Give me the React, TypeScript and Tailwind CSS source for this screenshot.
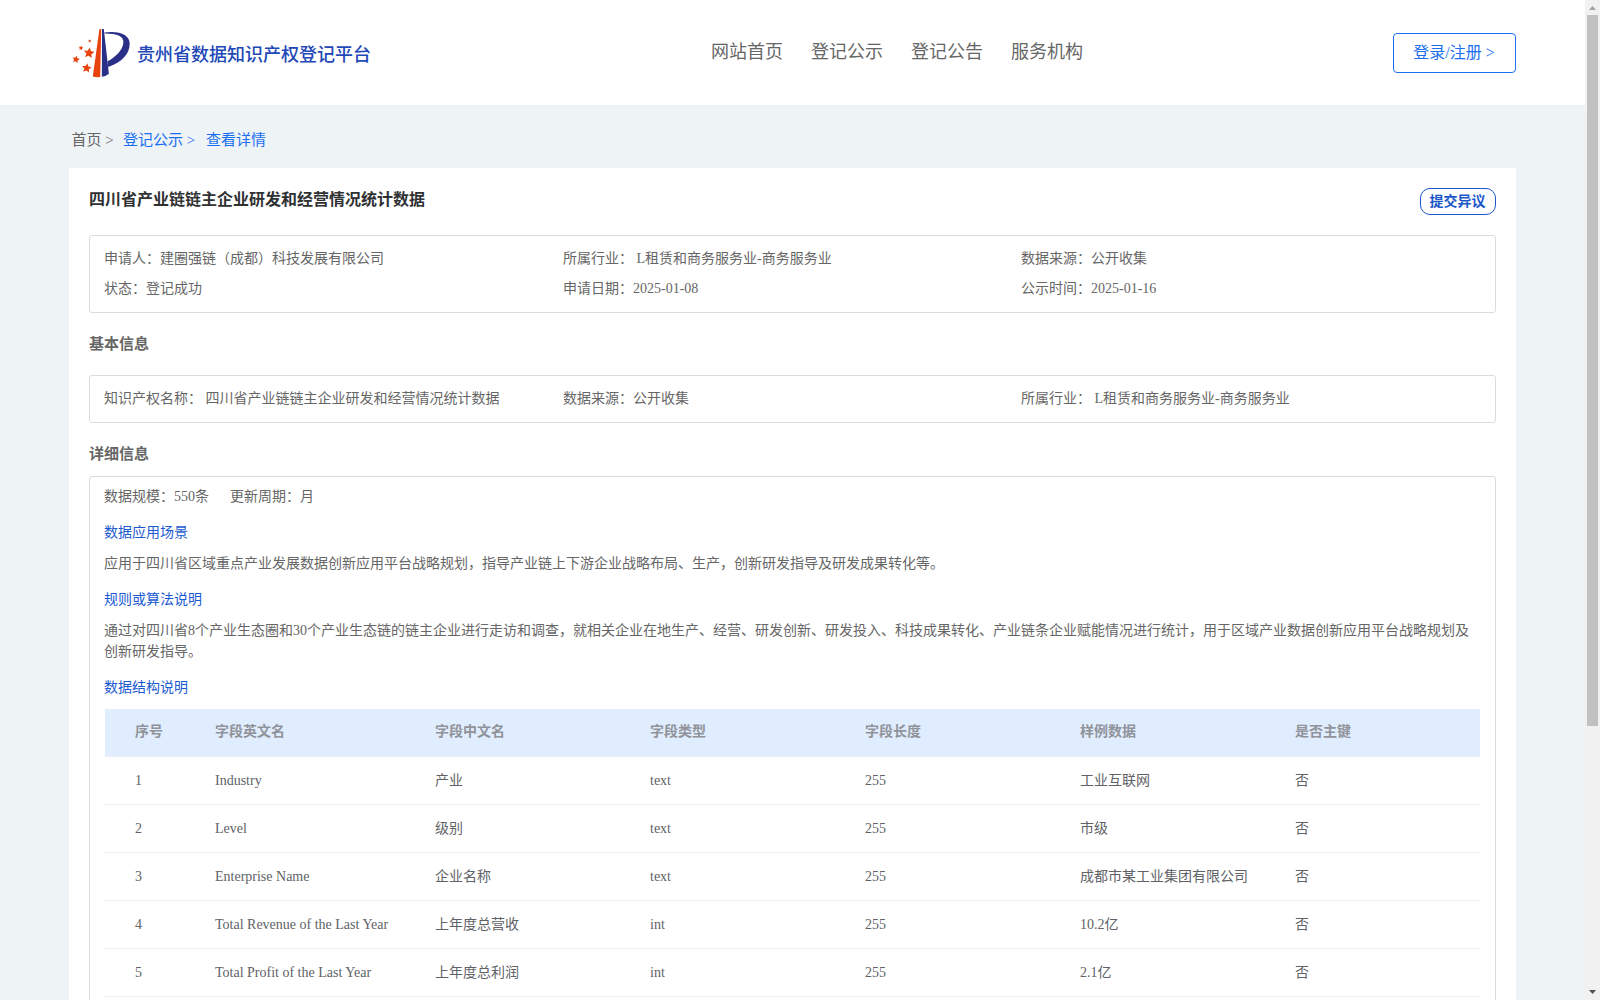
import React from "react";

const NAV = ["网站首页", "登记公示", "登记公告", "服务机构"];

const SUMMARY = [
  { label: "申请人：", value: "建圈强链（成都）科技发展有限公司" },
  { label: "所属行业：", value: " L租赁和商务服务业-商务服务业" },
  { label: "数据来源：", value: "公开收集" },
  { label: "状态：", value: "登记成功" },
  { label: "申请日期：", value: "2025-01-08" },
  { label: "公示时间：", value: "2025-01-16" },
];

const BASIC = [
  { label: "知识产权名称：", value: " 四川省产业链链主企业研发和经营情况统计数据" },
  { label: "数据来源：", value: "公开收集" },
  { label: "所属行业：", value: " L租赁和商务服务业-商务服务业" },
];

const COLUMNS = ["序号", "字段英文名", "字段中文名", "字段类型", "字段长度", "样例数据", "是否主键"];

const ROWS = [
  ["1", "Industry", "产业", "text", "255", "工业互联网", "否"],
  ["2", "Level", "级别", "text", "255", "市级", "否"],
  ["3", "Enterprise Name", "企业名称", "text", "255", "成都市某工业集团有限公司", "否"],
  ["4", "Total Revenue of the Last Year", "上年度总营收", "int", "255", "10.2亿", "否"],
  ["5", "Total Profit of the Last Year", "上年度总利润", "int", "255", "2.1亿", "否"],
];

const STARS = [
  { x: 21, y: 29, r: 5.6, tilt: 8 },
  { x: 8, y: 35.5, r: 3.9, tilt: 12 },
  { x: 18.7, y: 44.2, r: 5, tilt: 8 },
  { x: 13, y: 24, r: 2.5, tilt: 10 },
  { x: 21.7, y: 17, r: 1.7, tilt: 0 },
];

function starPoints(r: number) {
  return Array.from({ length: 10 }, (_, i) => {
    const radius = i % 2 ? r * 0.48 : r;
    const a = (Math.PI / 5) * i - Math.PI / 2;
    return `${(radius * Math.cos(a)).toFixed(2)},${(radius * Math.sin(a)).toFixed(2)}`;
  }).join(" ");
}

function Logo() {
  return (
    <svg width="66" height="60" viewBox="0 0 66 60" className="shrink-0">
      <path d="M31.4 5.3 L33.2 5 L32.2 53 Q28 53.4 24.8 52.6 Z" fill="#e8430f" />
      <path d="M34 5 L35.8 5 L40.9 49.8 Q38 52.4 33.9 52.8 Z" fill="#2a3088" />
      <path
        d="M36.5 8.4 C45 7 61.7 8 61.7 19.5 C61.7 30 54 38 40.2 43 L39.6 37.2 C47 33.5 55.4 26 55.4 17.5 C55.2 12 49 9.3 36.5 9.4 Z"
        fill="#2a3088"
      />
      {STARS.map((s) => (
        <polygon
          key={`${s.x}-${s.y}`}
          points={starPoints(s.r)}
          transform={`translate(${s.x} ${s.y}) rotate(${s.tilt})`}
          fill="#e8430f"
        />
      ))}
    </svg>
  );
}

function InfoGrid({ items }: { items: { label: string; value: string }[] }) {
  return (
    <div className="grid grid-cols-[459px_458px_458px] rounded-[3px] border border-[#dcdcdc] px-[14px] pt-[7px] pb-[9px]">
      {items.map((it) => (
        <div key={it.label} className="h-[30px] whitespace-pre leading-[31px]">
          {it.label}
          {it.value}
        </div>
      ))}
    </div>
  );
}

function Scrollbar() {
  return (
    <div className="flex w-[15px] shrink-0 flex-col items-center bg-[#f1f1f1]">
      <svg width="15" height="15" viewBox="0 0 15 15" className="shrink-0">
        <path d="M4 10 L7.5 6 L11 10 Z" fill="#a3a3a3" />
      </svg>
      <div className="h-[711px] w-[11px] bg-[#c1c1c1]" />
      <svg width="15" height="15" viewBox="0 0 15 15" className="mt-auto shrink-0">
        <path d="M4 5 L11 5 L7.5 9 Z" fill="#505050" />
      </svg>
    </div>
  );
}

export default function App() {
  return (
    <div className="flex h-screen overflow-hidden bg-[#eef3f6] font-['Liberation_Serif','Noto_Sans_CJK_SC',serif] text-sm text-[#666]">
      <div className="min-w-0 flex-1">
        <header className="h-[105px] bg-white">
          <div className="mx-[69px] flex items-start">
            <div className="-ml-px flex w-[643px] items-start pt-6">
              <Logo />
              <h1 className="ml-[3px] pt-px text-lg leading-[60px] font-medium whitespace-nowrap text-[#2248b8]">
                贵州省数据知识产权登记平台
              </h1>
            </div>
            <nav className="flex gap-7 pt-[38px] text-lg leading-7 text-[#666]">
              {NAV.map((item) => (
                <a key={item}>{item}</a>
              ))}
            </nav>
            <div className="ml-auto flex pt-[33px]">
              <button className="h-10 w-[123px] rounded border border-[#1a6ff0] pr-px text-base whitespace-nowrap text-[#1a6ff0]">
                登录/注册 &gt;
              </button>
            </div>
          </div>
        </header>

        <div className="ml-[71.5px] flex h-[63px] items-center pt-[9px] text-[15px] whitespace-pre text-[#1a6ff0]">
          <span className="w-[51.5px] text-[#666]">首页 &gt;</span>
          <span className="w-[83px]">登记公示 &gt;</span>
          <span>查看详情</span>
        </div>

        <main className="mx-[69px] bg-white px-5 py-5">
          <div className="flex h-[47px] items-start justify-between">
            <h2 className="text-base leading-[23px] font-bold text-[#303133]">
              四川省产业链链主企业研发和经营情况统计数据
            </h2>
            <button className="h-[27px] w-[76px] rounded-[10px] border border-[#1a57c8] pr-px leading-[24px] font-bold text-[#1a57c8]">
              提交异议
            </button>
          </div>

          <InfoGrid items={SUMMARY} />
          <h3 className="flex h-[62px] items-center pt-px text-[15px] font-bold">基本信息</h3>
          <InfoGrid items={BASIC} />
          <h3 className="flex h-[53px] items-center pt-[10px] text-[15px] font-bold">详细信息</h3>

          <div className="rounded-[3px] border border-[#dcdcdc] px-[14px] pt-[9px] pb-5 leading-[21px]">
            <div className="flex gap-[21px]">
              <span>数据规模：550条</span>
              <span className="flex">
                更新周期：<span>月</span>
              </span>
            </div>
            <h4 className="mt-[15px] text-[#1a5ad0]">数据应用场景</h4>
            <p className="mt-[10px]">
              应用于四川省区域重点产业发展数据创新应用平台战略规划，指导产业链上下游企业战略布局、生产，创新研发指导及研发成果转化等。
            </p>
            <h4 className="mt-[15px] text-[#1a5ad0]">规则或算法说明</h4>
            <p className="mt-[10px]">
              通过对四川省8个产业生态圈和30个产业生态链的链主企业进行走访和调查，就相关企业在地生产、经营、研发创新、研发投入、科技成果转化、产业链条企业赋能情况进行统计，用于区域产业数据创新应用平台战略规划及创新研发指导。
            </p>
            <h4 className="mt-[15px] text-[#1a5ad0]">数据结构说明</h4>

            <table className="mt-[11px] ml-px w-[1375px] table-fixed border-separate border-spacing-0 text-left text-[#606266]">
              <colgroup>
                <col className="w-[80px]" />
                <col className="w-[220px]" />
                <col span={5} className="w-[215px]" />
              </colgroup>
              <thead>
                <tr className="h-12 bg-[#e0edff] text-[#909399]">
                  {COLUMNS.map((c) => (
                    <th key={c} className="border-b border-[#ebeef5] pb-[2px] pl-[30px] font-bold whitespace-nowrap">
                      {c}
                    </th>
                  ))}
                </tr>
              </thead>
              <tbody>
                {ROWS.map((row) => (
                  <tr key={row[0]} className="h-12">
                    {row.map((cell, i) => (
                      <td key={i} className="border-b border-[#ebeef5] pl-[30px] whitespace-nowrap">
                        {cell}
                      </td>
                    ))}
                  </tr>
                ))}
              </tbody>
            </table>
          </div>
        </main>
      </div>
      <Scrollbar />
    </div>
  );
}
